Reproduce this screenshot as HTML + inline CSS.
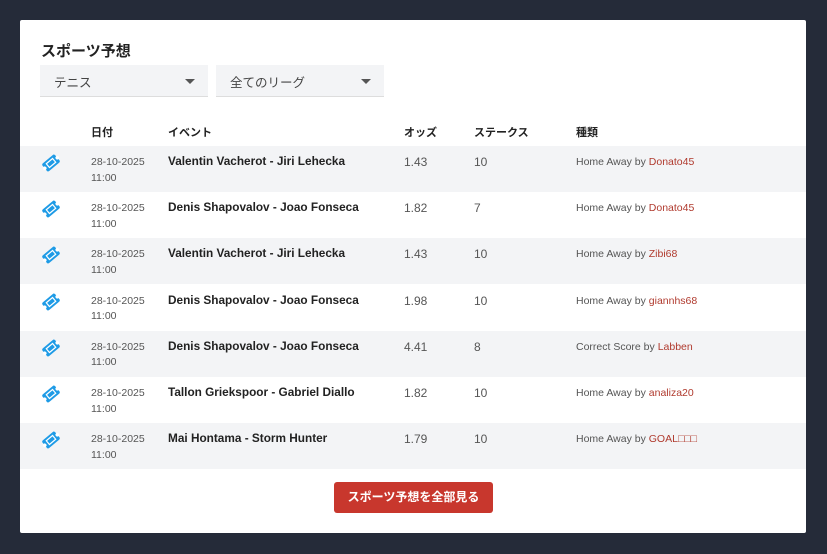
<!DOCTYPE html>
<html><head><meta charset="utf-8"><style>
*{margin:0;padding:0;box-sizing:border-box}
body{width:827px;height:554px;background:#252b39;font-family:"Liberation Sans","Noto Sans CJK JP",sans-serif;position:relative;overflow:hidden}
.card{position:absolute;left:20px;top:20px;width:786px;height:513px;background:#fff;border-radius:2px}
h1{position:absolute;left:21px;top:20px;font-size:15px;font-weight:bold;color:#222}
.sel{position:absolute;top:45px;height:32px;width:168px;background:#f3f4f6;border-bottom:1px solid #ddd;font-size:12.5px;color:#444;padding:7px 0 0 14px}
.sel:after{content:"";position:absolute;right:13px;top:14px;border:5px solid transparent;border-top:5px solid #555}
.hd{position:absolute;top:104px;font-size:11px;font-weight:bold;color:#222}
.row{position:absolute;left:0;width:786px;height:46px}
.row.g{background:#f3f4f6}
.row div{position:absolute}
.ic{left:21px;top:7px}
.d{left:71px;top:9px;font-size:10.5px;color:#555;line-height:15.5px}
.e{left:148px;top:8px;font-size:11.8px;font-weight:bold;color:#222}
.o{left:384px;top:9px;font-size:12px;color:#555}
.s{left:454px;top:9px;font-size:12px;color:#555}
.t{left:556px;top:10px;font-size:10.5px;color:#555}
.t span{color:#b03a2e}
.btn{position:absolute;left:314px;top:462px;width:159px;height:31px;background:#c8372d;border-radius:3px;color:#fff;font-size:12px;font-weight:bold;text-align:center;line-height:31px}
</style></head><body>
<div class="card">
<h1>スポーツ予想</h1>
<div class="sel" style="left:20px">テニス</div>
<div class="sel" style="left:196px">全てのリーグ</div>
<div class="hd" style="left:71px">日付</div>
<div class="hd" style="left:148px">イベント</div>
<div class="hd" style="left:384px">オッズ</div>
<div class="hd" style="left:454px">ステークス</div>
<div class="hd" style="left:556px">種類</div>
</div>
<script>
const rows=[
["Valentin Vacherot - Jiri Lehecka","1.43","10","Home Away","Donato45"],
["Denis Shapovalov - Joao Fonseca","1.82","7","Home Away","Donato45"],
["Valentin Vacherot - Jiri Lehecka","1.43","10","Home Away","Zibi68"],
["Denis Shapovalov - Joao Fonseca","1.98","10","Home Away","giannhs68"],
["Denis Shapovalov - Joao Fonseca","4.41","8","Correct Score","Labben"],
["Tallon Griekspoor - Gabriel Diallo","1.82","10","Home Away","analiza20"],
["Mai Hontama - Storm Hunter","1.79","10","Home Away","GOAL□□□"]];
const icon='<svg width="20" height="20" viewBox="0 0 22 22"><g transform="rotate(-40 11 11)"><rect x="2" y="5.5" width="18" height="11" rx="2" fill="#1e9be6"/><circle cx="2" cy="11" r="2" fill="#fff"/><circle cx="20" cy="11" r="2" fill="#fff"/><rect x="6.5" y="8.3" width="9" height="5.4" fill="none" stroke="#fff" stroke-width="1.3"/></g></svg>';
let h='';
rows.forEach((r,i)=>{h+=`<div class="row ${i%2?'':'g'}" style="top:${126+i*46.2}px"><div class="ic">${icon}</div><div class="d">28-10-2025<br>11:00</div><div class="e">${r[0]}</div><div class="o">${r[1]}</div><div class="s">${r[2]}</div><div class="t">${r[3]} by <span>${r[4]}</span></div></div>`});
h+='<div class="btn">スポーツ予想を全部見る</div>';
document.querySelector('.card').insertAdjacentHTML('beforeend',h);
</script>
</body></html>
